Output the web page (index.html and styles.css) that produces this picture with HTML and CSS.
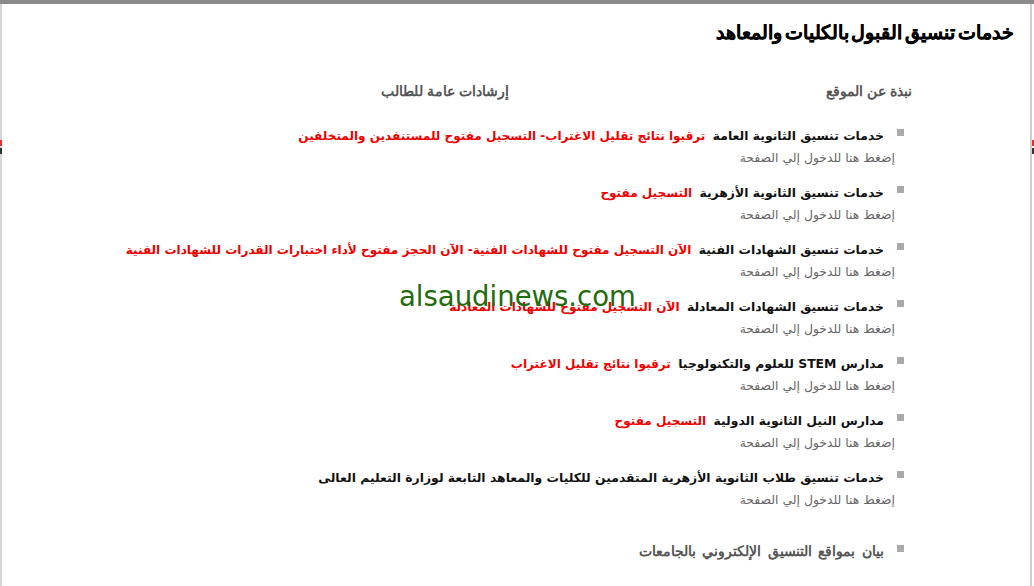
FILE: index.html
```html
<!DOCTYPE html>
<html lang="ar" dir="rtl">
<head>
<meta charset="utf-8">
<title>خدمات تنسيق القبول بالكليات والمعاهد</title>
<link rel="stylesheet" href="styles.css">
</head>
<body>
<div class="topbar"></div>
<div class="page">
  <span class="edge edge-left"></span>
  <span class="edge edge-right"></span>
  <h1 class="title">خدمات تنسيق القبول بالكليات والمعاهد</h1>
  <nav class="nav">
    <a class="nav-link nav-about" href="#">نبذة عن الموقع</a>
    <a class="nav-link" href="#">إرشادات عامة للطالب</a>
  </nav>
  <ul class="list">
    <li class="item">
      <div class="item-head"><span class="bullet"></span><span class="name">خدمات تنسيق الثانوية العامة</span> <span class="note">ترقبوا نتائج تقليل الاغتراب- التسجيل مفتوح للمستنفدين والمتخلفين</span></div>
      <a class="enter" href="#">إضغط هنا للدخول إلي الصفحة</a>
    </li>
    <li class="item">
      <div class="item-head"><span class="bullet"></span><span class="name">خدمات تنسيق الثانوية الأزهرية</span> <span class="note">التسجيل مفتوح</span></div>
      <a class="enter" href="#">إضغط هنا للدخول إلي الصفحة</a>
    </li>
    <li class="item">
      <div class="item-head"><span class="bullet"></span><span class="name">خدمات تنسيق الشهادات الفنية</span> <span class="note">الآن التسجيل مفتوح للشهادات الفنية- الآن الحجز مفتوح لأداء اختبارات القدرات للشهادات الفنية</span></div>
      <a class="enter" href="#">إضغط هنا للدخول إلي الصفحة</a>
    </li>
    <li class="item">
      <div class="item-head"><span class="bullet"></span><span class="name">خدمات تنسيق الشهادات المعادلة</span> <span class="note">الآن التسجيل مفتوح للشهادات المعادلة</span></div>
      <a class="enter" href="#">إضغط هنا للدخول إلي الصفحة</a>
    </li>
    <li class="item">
      <div class="item-head"><span class="bullet"></span><span class="name">مدارس STEM للعلوم والتكنولوجيا</span> <span class="note">ترقبوا نتائج تقليل الاغتراب</span></div>
      <a class="enter" href="#">إضغط هنا للدخول إلي الصفحة</a>
    </li>
    <li class="item">
      <div class="item-head"><span class="bullet"></span><span class="name">مدارس النيل الثانوية الدولية</span> <span class="note">التسجيل مفتوح</span></div>
      <a class="enter" href="#">إضغط هنا للدخول إلي الصفحة</a>
    </li>
    <li class="item">
      <div class="item-head"><span class="bullet"></span><span class="name">خدمات تنسيق طلاب الثانوية الأزهرية المتقدمين للكليات والمعاهد التابعة لوزارة التعليم العالى</span></div>
      <a class="enter" href="#">إضغط هنا للدخول إلي الصفحة</a>
    </li>
    <li class="item item-last">
      <div class="item-head"><span class="bullet"></span><span class="name name-gray">بيان بمواقع التنسيق الإلكتروني بالجامعات</span></div>
    </li>
  </ul>
  <div class="watermark">alsaudinews.com</div>
</div>
</body>
</html>
```
FILE: styles.css
```css
html, body {
  margin: 0;
  padding: 0;
  background: #ffffff;
}
body {
  direction: rtl;
  font-family: "DejaVu Sans", "Liberation Sans", sans-serif;
  width: 1034px;
  height: 586px;
  overflow: hidden;
}
.topbar {
  height: 4px;
  background: #8a8a8a;
}
.page {
  position: relative;
  height: 582px;
  border-left: 2px solid #d6d6d6;
  border-right: 2px solid #cfcfcf;
  margin-right: 2px;
  box-sizing: border-box;
}
.edge {
  position: absolute;
  top: 136px;
  width: 2px;
  height: 14px;
  background: linear-gradient(#e03030 0 6px, transparent 6px 8px, #333 8px 14px);
}
.edge-left { left: -2px; }
.edge-right { right: -4px; }
.title {
  margin: 0;
  padding: 15px 16px 0 0;
  font-family: "Liberation Sans", Arial, sans-serif;
  font-weight: bold;
  font-size: 19px;
  word-spacing: -2.5px;
  line-height: 28px;
  color: #000;
  -webkit-text-stroke: 0.3px #000;
}
.nav {
  display: flex;
  padding: 35px 118px 0 0;
}
.nav-link {
  font-family: "Liberation Sans", Arial, sans-serif;
  font-weight: bold;
  font-size: 14px;
  color: #555;
  text-decoration: none;
  line-height: 18px;
}
.nav-about {
  width: 403px;
}
.list {
  list-style: none;
  margin: 0;
  padding: 26px 126px 0 0;
}
.item {
  height: 57px;
}
.item-head {
  font-weight: bold;
  font-size: 12.4px;
  line-height: 20px;
  color: #111;
  white-space: nowrap;
}
.bullet {
  display: inline-block;
  width: 7px;
  height: 7px;
  background: #aaa;
  margin-left: 13px;
  vertical-align: 4px;
}
.note {
  color: #ee0000;
  font-size: 12.05px;
  margin-right: 3px;
}
.name-gray {
  color: #555;
  font-family: "Liberation Sans", Arial, sans-serif;
  font-size: 14px;
  word-spacing: 2.7px;
}
.enter {
  display: block;
  padding-right: 9px;
  margin-top: 2px;
  font-size: 12.4px;
  line-height: 20px;
  color: #666;
  text-decoration: none;
}
.item-last {
  padding-top: 16px;
}
.watermark {
  position: absolute;
  left: 397px;
  top: 272px;
  direction: ltr;
  font-family: "DejaVu Sans", sans-serif;
  font-size: 27.5px;
  color: #236b0c;
  line-height: 40px;
}
```
